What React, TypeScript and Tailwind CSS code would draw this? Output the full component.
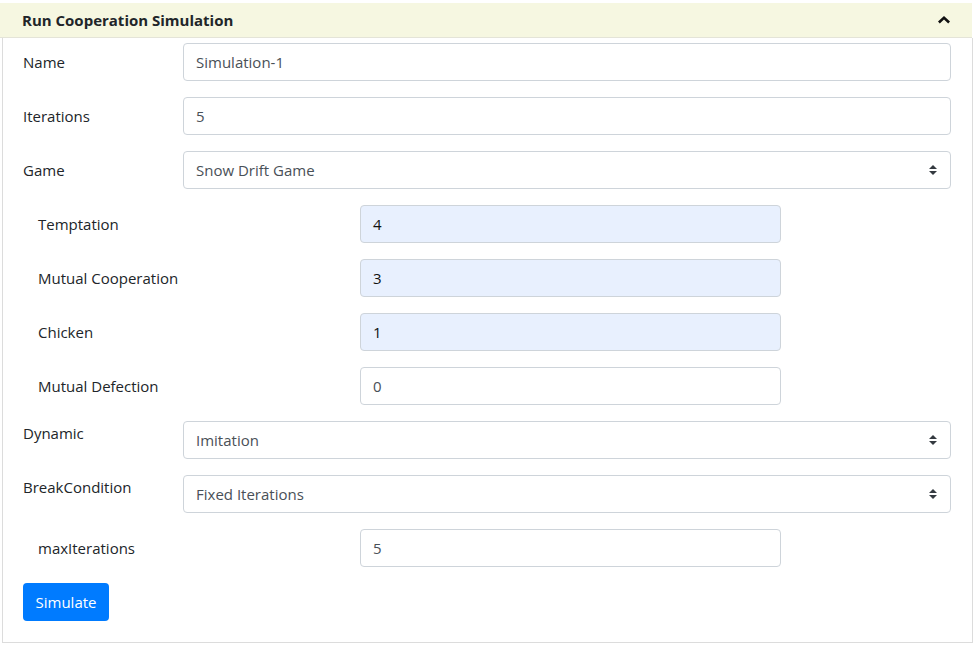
import React from "react";

const font = { fontFamily: '"Open Sans", "Noto Sans", sans-serif' };

function SelectArrow() {
  return (
    <svg width="8" height="10" viewBox="0 0 4 5" className="absolute right-[13px] top-1/2 -translate-y-1/2">
      <path d="M2 0L0 2h4zm0 5L0 3h4z" fill="#343a40" />
    </svg>
  );
}

function Field({ value, select, filled }: { value: string; select?: boolean; filled?: boolean }) {
  return (
    <div
      className={`relative h-[38px] w-full border border-[#ced4da] rounded-[4px] px-[12px] flex items-center text-[15px] ${
        filled ? "bg-[#e8f0fe] text-[#111]" : "bg-white text-[#495057]"
      }`}
    >
      {value}
      {select && <SelectArrow />}
    </div>
  );
}

function Row({ label, value, select, top }: { label: string; value: string; select?: boolean; top?: boolean }) {
  return (
    <div className={`flex mb-4 ${top ? "items-start" : "items-center"}`}>
      <label className={`w-[160px] shrink-0 text-[15px] text-[#212529] ${top ? "leading-[24px]" : ""}`}>{label}</label>
      <Field value={value} select={select} />
    </div>
  );
}

function SubRow({ label, value, filled }: { label: string; value: string; filled?: boolean }) {
  return (
    <div className="flex items-center mb-4 pl-[15px]">
      <label className="w-[322px] shrink-0 text-[15px] text-[#212529]">{label}</label>
      <div className="w-[421px]">
        <Field value={value} filled={filled} />
      </div>
    </div>
  );
}

export default function App() {
  return (
    <div className="w-[976px] h-[646px] bg-white pt-[3px]" style={font}>
      {/* Kopfzeile */}
      <div className="w-[972px] h-[35px] bg-[#f6f7e1] border-b border-[#e4e4d8] flex items-center justify-between pl-[22px] pr-[22px]">
        <span className="font-bold text-[15px] text-[#212529]">Run Cooperation Simulation</span>
        <svg width="12" height="8" viewBox="0 0 12 8">
          <path d="M6 0L12 5.6 10.2 7.5 6 3.6 1.8 7.5 0 5.6z" fill="#111" />
        </svg>
      </div>

      <div className="ml-[2px] w-[971px] border-x border-b border-[#dcdcdc] pt-[5px] pb-[21px] pl-[20px] pr-[21px]">
        <Row label="Name" value="Simulation-1" />
        <Row label="Iterations" value="5" />
        <Row label="Game" value="Snow Drift Game" select />

        <SubRow label="Temptation" value="4" filled />
        <SubRow label="Mutual Cooperation" value="3" filled />
        <SubRow label="Chicken" value="1" filled />
        <SubRow label="Mutual Defection" value="0" />

        <Row label="Dynamic" value="Imitation" select top />
        <Row label="BreakCondition" value="Fixed Iterations" select top />

        <SubRow label="maxIterations" value="5" />

        <button className="h-[38px] w-[86px] bg-[#007bff] text-white text-[15px] rounded-[4px]">
          Simulate
        </button>
      </div>
    </div>
  );
}
